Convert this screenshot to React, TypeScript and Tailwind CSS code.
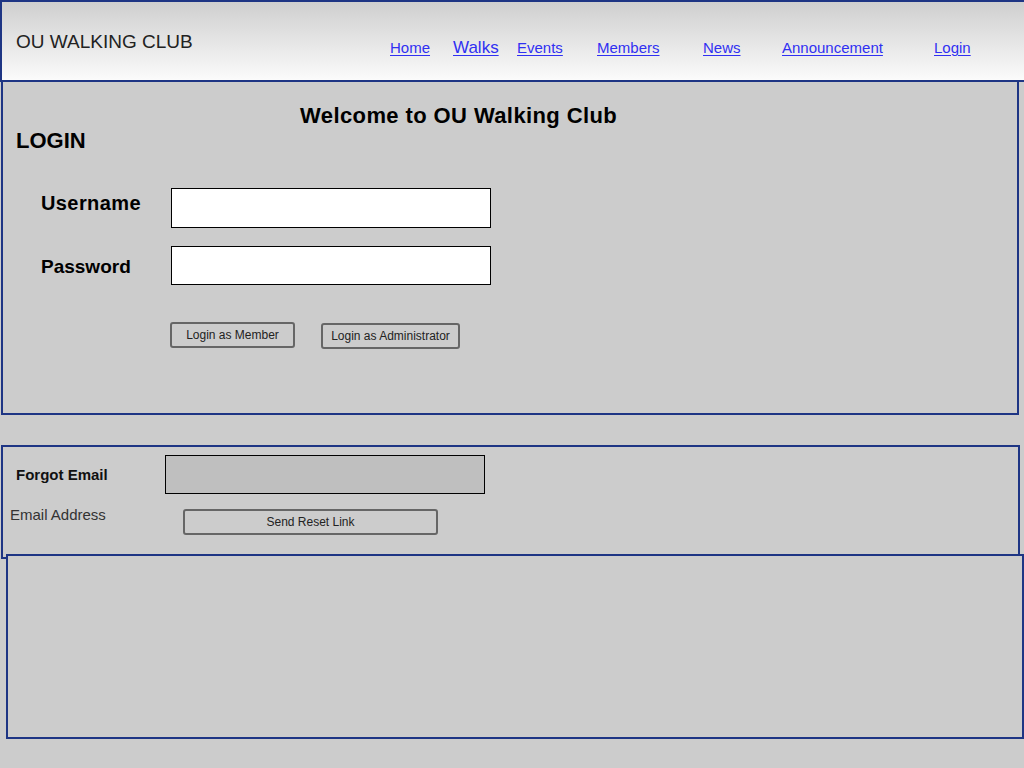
const navLinks: { label: string; width: string; size: string }[] = [
  { label: 'Home', width: 'w-[63px]', size: 'text-[15px]' },
  { label: 'Walks', width: 'w-[64px]', size: 'text-[17px]' },
  { label: 'Events', width: 'w-[80px]', size: 'text-[15px]' },
  { label: 'Members', width: 'w-[106px]', size: 'text-[15px]' },
  { label: 'News', width: 'w-[79px]', size: 'text-[15px]' },
  { label: 'Announcement', width: 'w-[152px]', size: 'text-[15px]' },
  { label: 'Login', width: 'w-[60px]', size: 'text-[15px]' },
]

const sketch = "font-['Comic_Sans_MS','Liberation_Sans',sans-serif]"

function Header() {
  return (
    <header className="flex h-[82px] w-full items-start border-y-2 border-l-2 border-[#1e3584] bg-gradient-to-b from-[#cfcfcf] to-[#fbfbfb]">
      <div className="w-[388px] pl-[14px] pt-[29px] text-[19px] leading-[22px] text-[#222]">OU WALKING CLUB</div>
      <nav className={`flex items-baseline pt-[33px] ${sketch}`}>
        {navLinks.map((link) => (
          <div key={link.label} className={link.width}>
            <a href="#" className={`${link.size} text-[#3030f2] underline underline-offset-2`}>
              {link.label}
            </a>
          </div>
        ))}
      </nav>
    </header>
  )
}

function SketchButton({ label, className }: { label: string; className: string }) {
  return (
    <button
      className={`flex items-center justify-center rounded-[3px] border-2 border-[#666] text-[12px] text-[#222] ${sketch} ${className}`}
    >
      {label}
    </button>
  )
}

function LoginPanel() {
  return (
    <section className="-mt-[2px] ml-[1px] h-[335px] w-[1018px] border-2 border-[#1e3584] pt-[21px]">
      <h1 className="pl-[297px] text-[22px] font-bold leading-[25px] tracking-[0.4px] text-black">
        Welcome to OU Walking Club
      </h1>
      <h2 className="pl-[13px] text-[22px] font-bold leading-[25px] text-black">LOGIN</h2>

      <div className="mt-[35px] flex items-start pl-[38px]">
        <label className="mt-[4px] w-[130px] text-[20px] font-bold leading-[23px] tracking-[0.4px] text-black">
          Username
        </label>
        <input className="h-[40px] w-[320px] border border-black bg-white px-2 outline-none" />
      </div>
      <div className="mt-[18px] flex items-start pl-[38px]">
        <label className="mt-[9px] w-[130px] text-[19px] font-bold leading-[23px] text-black">Password</label>
        <input type="password" className="h-[39px] w-[320px] border border-black bg-white px-2 outline-none" />
      </div>

      <div className="mt-[37px] flex items-start pl-[167px]">
        <SketchButton label="Login as Member" className="h-[26px] w-[125px]" />
        <SketchButton label="Login as Administrator" className="ml-[26px] mt-[1px] h-[26px] w-[139px]" />
      </div>
    </section>
  )
}

function ForgotPanel() {
  return (
    <section className="ml-[1px] mt-[30px] h-[114px] w-[1019px] border-2 border-[#1e3584] pt-[8px]">
      <div className="flex items-center">
        <span className="w-[162px] pl-[13px] text-[15px] font-bold leading-[17px] text-[#111]">Forgot Email</span>
        <input className="h-[39px] w-[320px] border border-black bg-[#bfbfbf] px-2 outline-none" />
      </div>
      <div className="mt-[12px] flex items-start">
        <span className="w-[180px] pl-[7px] text-[15px] leading-[17px] text-[#333]">Email Address</span>
        <SketchButton label="Send Reset Link" className="mt-[3px] h-[26px] w-[255px]" />
      </div>
    </section>
  )
}

export default function App() {
  return (
    <div className="h-[768px] w-[1024px] overflow-hidden bg-[#cccccc] font-['Liberation_Sans',Arial,sans-serif]">
      <Header />
      <LoginPanel />
      <ForgotPanel />
      <section className="-mt-[5px] ml-[6px] h-[185px] w-[1018px] border-2 border-[#1e3584] bg-[#cccccc]" />
    </div>
  )
}
